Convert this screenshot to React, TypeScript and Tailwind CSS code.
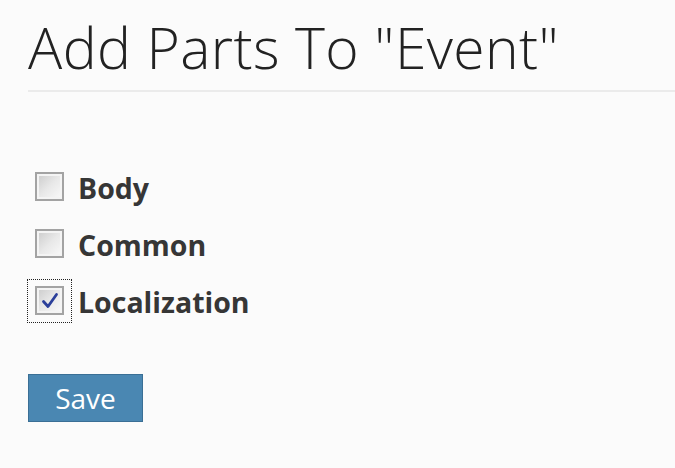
const parts = [
  { name: "Body", checked: false },
  { name: "Common", checked: false },
  { name: "Localization", checked: true },
];

function Box({ checked }: { checked: boolean }) {
  return (
    <div className="w-[29px] h-[29px] border-2 border-[#a3a3a3] p-[2px] bg-[#f4f4f4]">
      <div className="w-full h-full bg-gradient-to-br from-[#cfcfcf] via-[#e8e8e8] to-[#f7f7f7] flex items-center justify-center">
        {checked && (
          <svg width="20" height="20" viewBox="0 0 20 20">
            <path
              d="M3.5 10.5 L8 15.5 L16.5 3.5"
              fill="none"
              stroke="#2b3f9a"
              strokeWidth="2.8"
              strokeLinecap="round"
              strokeLinejoin="round"
            />
          </svg>
        )}
      </div>
    </div>
  );
}

export default function App() {
  return (
    <div className="w-[675px] h-[468px] bg-[#fbfbfb] pl-[28px] font-['Open_Sans',sans-serif] overflow-hidden">
      {/* Header */}
      <h1 className="pt-[19px] text-[57px] leading-none font-light text-[#222] tracking-[0.4px]">
        Add Parts To "Event"
      </h1>
      <div className="mt-[14px] h-[2px] bg-[#ebebeb]" />

      {/* Part list */}
      <div className="mt-[66px] flex flex-col">
        {parts.map((p) => (
          <div key={p.name} className="h-[57px] flex items-center">
            <div
              className={
                p.checked
                  ? "ml-[-1px] w-[45px] h-[44px] border border-dotted border-[#222] flex items-center justify-center"
                  : "ml-[-1px] w-[45px] h-[44px] border border-transparent flex items-center justify-center"
              }
            >
              <Box checked={p.checked} />
            </div>
            <span className="ml-[6px] pt-[4px] text-[28.5px] font-bold text-[#363636]">{p.name}</span>
          </div>
        ))}
      </div>

      <button className="mt-[45px] w-[115px] h-[48px] bg-[#4a87b2] border border-[#3a6f95] text-white text-[28px] leading-none">
        Save
      </button>
    </div>
  );
}
